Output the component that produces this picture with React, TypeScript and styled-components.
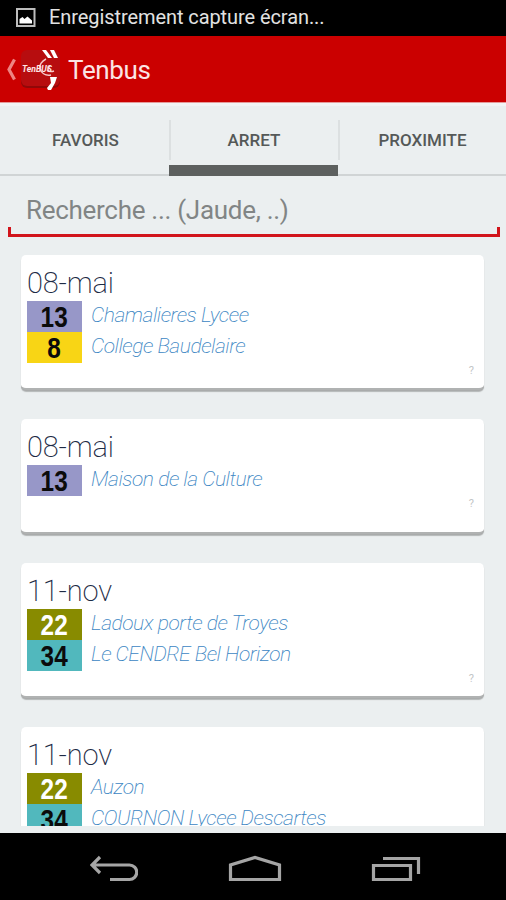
import React from "react";
import styled, { createGlobalStyle } from "styled-components";

const GlobalStyle = createGlobalStyle`
  * { box-sizing: border-box; }
  body { margin: 0; background: #000; }
`;

const Screen = styled.div`
  width: 506px;
  height: 900px;
  display: flex;
  flex-direction: column;
  overflow: hidden;
  background: #ebeff0;
  font-family: Roboto, "Liberation Sans", sans-serif;
  white-space: nowrap;
`;

const StatusBar = styled.header`
  height: 36px;
  flex: none;
  display: flex;
  align-items: center;
  padding: 0 0 2px 16px;
  gap: 13px;
  background: #000;
  color: #e2e2e2;
  font-size: 20px;
  letter-spacing: -0.08px;
`;

const ActionBar = styled.div`
  height: 67px;
  flex: none;
  display: flex;
  align-items: center;
  padding-left: 6px;
  background: #cb0000;
  border-bottom: 1px solid #e59a9a;
`;

const AppTitle = styled.h1`
  margin: 2px 0 0 8px;
  color: #fbe5e5;
  font-size: 26px;
  font-weight: 400;
  letter-spacing: -0.35px;
`;

const TabBar = styled.nav`
  height: 73px;
  flex: none;
  display: grid;
  grid-template-columns: 169px 169px 168px;
  border-top: 3px solid #f2f4f5;
`;

const Tab = styled.div<{ $active?: boolean }>`
  display: flex;
  flex-direction: column;
  justify-content: space-between;
  border-bottom: ${(p) => (p.$active ? "11px solid #5d605f" : "2px solid #d0d4d5")};
`;

const TabLabel = styled.div<{ $divided?: boolean }>`
  height: 40px;
  margin-top: 14px;
  padding: ${(p) => (p.$divided ? "0 1px 0 0" : "0 0 0 2px")};
  display: flex;
  align-items: center;
  justify-content: center;
  color: #555958;
  font-size: 17px;
  font-weight: 500;
  border-left: ${(p) => (p.$divided ? "2px solid #dce0e1" : "0")};
`;

const SearchField = styled.div`
  height: 62px;
  flex: none;
  display: flex;
  flex-direction: column;
  padding: 0 6px 0 8px;
`;

const Placeholder = styled.div`
  height: 51px;
  padding: 19px 0 0 18px;
  color: #818585;
  font-size: 26px;
  line-height: 30px;
  letter-spacing: -0.29px;
`;

const Underline = styled.div`
  height: 10px;
  border: 3px solid #d1141b;
  border-top: 0;
`;

const CardList = styled.main`
  height: 588px;
  flex: none;
  overflow: hidden;
  display: flex;
  flex-direction: column;
  gap: 29px;
  padding: 17px 22px 0 21px;
`;

const Card = styled.article<{ $height: number }>`
  height: ${(p) => p.$height}px;
  flex: none;
  display: flex;
  flex-direction: column;
  padding: 11px 10px 0 6px;
  border-radius: 5px;
  background: #fff;
  box-shadow: 0 1px 0 #a9abab, 0 2px 1px #b4b7b7;
  border-bottom: 2px solid #b0b2b2;
`;

const StopName = styled.h2`
  height: 35px;
  margin: 0;
  color: #1d2b45;
  font-size: 29px;
  font-weight: 200;
  line-height: 34px;
  letter-spacing: -0.2px;
`;

const Line = styled.div`
  height: 31px;
  flex: none;
  display: flex;
  gap: 9px;
`;

const Badge = styled.div<{ $bg: string; $fg?: string }>`
  width: 55px;
  height: 31px;
  display: flex;
  align-items: center;
  justify-content: center;
  background: ${(p) => p.$bg};
  color: ${(p) => p.$fg ?? "#0b0b0b"};
`;

const LineNumber = styled.span`
  font-family: "Liberation Sans", Arial, sans-serif;
  font-size: 29px;
  font-weight: 700;
  line-height: 31px;
  padding-top: 2px;
  transform: scaleX(0.84);
`;

const Destination = styled.div`
  color: #3c86c3;
  font-size: 21px;
  font-style: italic;
  font-weight: 200;
  line-height: 29px;
  letter-spacing: -0.46px;
`;

const Hint = styled.div`
  align-self: flex-end;
  color: #c2c5c7;
  font-size: 11px;
  line-height: 16px;
`;

const NavBar = styled.footer`
  height: 67px;
  margin-top: auto;
  flex: none;
  display: flex;
  padding: 22px 85px 0 90px;
  justify-content: space-between;
  background: #000;
`;

const PictureIcon = () => (
  <svg width="20" height="19" viewBox="0 0 20 19">
    <rect x="1" y="1" width="17.5" height="17" fill="#000" stroke="#bdbdbd" strokeWidth="2" />
    <path d="M3.5 15.5V11l3-2 2 2 3-2.5L16 12.5v3z" fill="#fff" />
  </svg>
);

const BackChevron = () => (
  <svg width="10" height="24" viewBox="0 0 10 24">
    <path d="M8.5 2.500 3 12.500 8.500 22.500" fill="none" stroke="#ee8583" strokeWidth="3.2" />
  </svg>
);

const LogoText = styled.text`
  font: italic 700 9.5px Roboto, sans-serif;
  fill: #ffe5e5;
`;

const Logo = () => (
  <svg width="44" height="44" viewBox="0 0 44 44">
    <rect x="5" y="6" width="39" height="35" rx="6" fill="#910808" />
    <rect x="5" y="3" width="39" height="36" rx="6" fill="#b70d0f" />
    <path d="M26 3h4l6 8h-4zM34 3h4l4 8h-4z" fill="#fff" />
    <path d="M30 12c-4 2-7 6-6 9 1 5 5 8 11 7M34 19c-4 3-2 7 4 5" fill="none" stroke="#f6c9c9" strokeWidth="1.500" />
    <path d="M34 30h7l-2 6-4 7h-3l-1-2 4-5z" fill="#fff" />
    <LogoText x="6" y="24.500" textLength="30" lengthAdjust="spacingAndGlyphs">TenBUS</LogoText>
  </svg>
);

const NavIcon = styled.svg`
  fill: none;
  stroke: #a5a5a5;
  stroke-width: 3.2;
`;

type Route = { no: string; to: string; bg: string; fg?: string };
type Stop = { name: string; height: number; hint?: string; routes: Route[] };

const stops: Stop[] = [
  {
    name: "08-mai",
    height: 135,
    hint: "?",
    routes: [
      { no: "13", to: "Chamalieres Lycee", bg: "#9797c8" },
      { no: "8", to: "College Baudelaire", bg: "#f8d515" },
    ],
  },
  {
    name: "08-mai",
    height: 115,
    hint: "?",
    routes: [{ no: "13", to: "Maison de la Culture", bg: "#9797c8" }],
  },
  {
    name: "11-nov",
    height: 135,
    hint: "?",
    routes: [
      { no: "22", to: "Ladoux porte de Troyes", bg: "#888b00", fg: "#fff" },
      { no: "34", to: "Le CENDRE Bel Horizon", bg: "#51b8bd" },
    ],
  },
  {
    name: "11-nov",
    height: 135,
    routes: [
      { no: "22", to: "Auzon", bg: "#888b00", fg: "#fff" },
      { no: "34", to: "COURNON Lycee Descartes", bg: "#51b8bd" },
    ],
  },
];

export default function App() {
  return (
    <>
      <GlobalStyle />
      <Screen>
        <StatusBar>
          <PictureIcon />
          <span>Enregistrement capture écran...</span>
        </StatusBar>
        <ActionBar>
          <BackChevron />
          <Logo />
          <AppTitle>Tenbus</AppTitle>
        </ActionBar>
        <TabBar>
          <Tab>
            <TabLabel>FAVORIS</TabLabel>
          </Tab>
          <Tab $active>
            <TabLabel $divided>ARRET</TabLabel>
          </Tab>
          <Tab>
            <TabLabel $divided>PROXIMITE</TabLabel>
          </Tab>
        </TabBar>
        <SearchField>
          <Placeholder>Recherche ... (Jaude, ..)</Placeholder>
          <Underline />
        </SearchField>
        <CardList>
          {stops.map((stop, i) => (
            <Card key={i} $height={stop.height}>
              <StopName>{stop.name}</StopName>
              {stop.routes.map((r) => (
                <Line key={r.no}>
                  <Badge $bg={r.bg} $fg={r.fg}>
                    <LineNumber>{r.no}</LineNumber>
                  </Badge>
                  <Destination>{r.to}</Destination>
                </Line>
              ))}
              {stop.hint && <Hint>{stop.hint}</Hint>}
            </Card>
          ))}
        </CardList>
        <NavBar>
          <NavIcon width="48" height="30" viewBox="0 0 48 30">
            <path d="M10 2 2 10l8 8M2 10h37.500a7.200 7.200 0 0 1 0 14.500H20" />
          </NavIcon>
          <NavIcon width="54" height="30" viewBox="0 0 54 30">
            <path d="M2.500 24.500V10L27 2.500 51.500 10v14.500z" />
          </NavIcon>
          <NavIcon width="50" height="30" viewBox="0 0 50 30">
            <path d="M2.500 10.500h37v14h-37zM12 3.500h35.500V19" />
          </NavIcon>
        </NavBar>
      </Screen>
    </>
  );
}
